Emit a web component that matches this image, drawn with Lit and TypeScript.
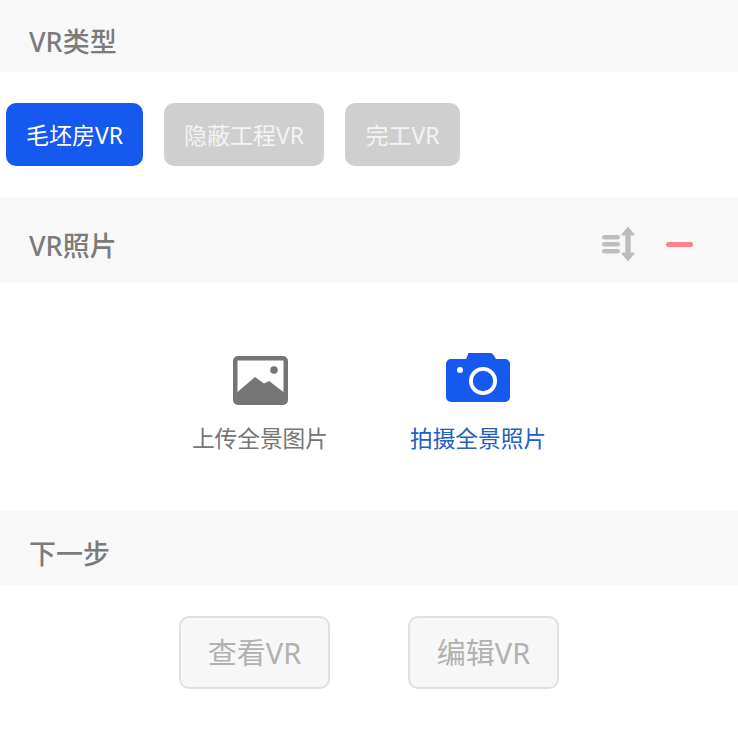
import { LitElement, html, css } from "lit";
import { customElement, state } from "lit/decorators.js";

interface VrType {
  label: string;
  width: number;
}

const VR_TYPES: VrType[] = [
  { label: "毛坯房VR", width: 137 },
  { label: "隐蔽工程VR", width: 160 },
  { label: "完工VR", width: 115 },
];

@customElement("app-root")
export class AppRoot extends LitElement {
  @state()
  active = 0;

  render() {
    return html`
      <div class="head first"><span>VR类型</span></div>
      <div class="types">
        ${VR_TYPES.map(
          (t, i) => html`
            <div
              class="type ${i === this.active ? "on" : ""}"
              style="width: ${t.width}px"
              @click=${() => (this.active = i)}
            >
              ${t.label}
            </div>
          `
        )}
      </div>

      <div class="head second">
        <span>VR照片</span>
        <div class="tools">
          <svg width="34" height="36" viewBox="0 0 34 36">
            <g fill="#bdbdbd">
              <rect x="1" y="9" width="18" height="4.6" rx="2.3" />
              <rect x="1" y="16" width="18" height="4.6" rx="2.3" />
              <rect x="1" y="23" width="18" height="4.6" rx="2.3" />
              <rect x="24.300" y="6" width="5.400" height="24" />
              <path d="M27 .5 33.300 8c.5.6.1 1.500-.7 1.500H21.400c-.8 0-1.200-.9-.7-1.500Z" />
              <path d="M27 35.500 33.300 28c.5-.6.1-1.500-.7-1.500H21.400c-.8 0-1.200.9-.7 1.500Z" />
            </g>
          </svg>
          <div class="minus"></div>
        </div>
      </div>
      <div class="uploads">
        <div class="upload">
          <div class="icon end">
            <svg class="shift" width="55" height="49" viewBox="0 0 55 49">
              <path
                fill="#757575"
                fill-rule="evenodd"
                d="M5 0h45a5 5 0 0 1 5 5v39a5 5 0 0 1-5 5H5a5 5 0 0 1-5-5V5a5 5 0 0 1 5-5ZM4.500 4.500v31.500L22 21l9 6.500 5-2.500 14.500 11V4.500Z"
              />
              <circle cx="41" cy="14" r="3.800" fill="#757575" />
            </svg>
          </div>
          <span>上传全景图片</span>
        </div>
        <div class="upload blue">
          <div class="icon">
            <svg width="64" height="49" viewBox="0 0 64 49">
              <path
                fill="#1659f0"
                fill-rule="evenodd"
                d="M23 0h21c1.500 0 2.500.6 3.100 1.600L50 6h9a5 5 0 0 1 5 5v33a5 5 0 0 1-5 5H5a5 5 0 0 1-5-5V11a5 5 0 0 1 5-5h15l2-4.400C22 .6 22 0 23 0ZM37 14a14 14 0 1 0 0 28 14 14 0 0 0 0-28Zm0 3.800a10.200 10.200 0 1 1 0 20.400 10.200 10.200 0 0 1 0-20.400ZM14 14a3 3 0 1 0 0 6 3 3 0 0 0 0-6Z"
              />
            </svg>
          </div>
          <span>拍摄全景照片</span>
        </div>
      </div>

      <div class="head third"><span>下一步</span></div>
      <div class="actions">
        <div class="action">查看VR</div>
        <div class="action">编辑VR</div>
      </div>
    `;
  }

  static styles = css`
    :host {
      display: block;
      width: 738px;
      height: 738px;
      overflow: hidden;
      background: #fff;
      font-family: "Noto Sans", "Noto Sans CJK SC", sans-serif;
    }

    .head {
      display: flex;
      align-items: center;
      justify-content: space-between;
      box-sizing: border-box;
      padding: 0 45px 0 29px;
      background: #f8f8f8;
      color: #7b7b7b;
      font-size: 27px;
      font-weight: 500;
    }

    .first {
      height: 72px;
      padding-top: 8px;
    }

    .second {
      height: 86px;
      padding-top: 8px;
    }

    .third {
      height: 74px;
      padding-top: 8px;
    }

    .tools {
      display: flex;
      align-items: center;
      gap: 31px;
    }

    .tools svg {
      display: block;
    }

    .minus {
      width: 27px;
      height: 5px;
      border-radius: 3px;
      background: #f8838a;
    }

    .types {
      display: flex;
      gap: 21px;
      height: 125px;
      padding: 31px 0 31px 6px;
      box-sizing: border-box;
    }

    .type {
      display: flex;
      align-items: center;
      justify-content: center;
      padding-bottom: 2px;
      box-sizing: border-box;
      border-radius: 10px;
      background: #cfcfcf;
      color: #f4f4f4;
      font-size: 23px;
      cursor: pointer;
    }

    .type.on {
      background: #1659f0;
      color: #fff;
    }

    .uploads {
      display: flex;
      justify-content: center;
      gap: 82px;
      height: 228px;
      padding-top: 70px;
      box-sizing: border-box;
    }

    .upload {
      display: flex;
      flex-direction: column;
      align-items: center;
      gap: 18px;
      color: #757575;
      font-size: 22.7px;
      line-height: 32px;
    }

    .upload.blue {
      color: #2260c4;
    }

    .icon {
      display: flex;
      height: 52px;
      align-items: flex-start;
    }

    .icon.end {
      align-items: flex-end;
    }

    .icon svg {
      display: block;
    }

    .icon svg.shift {
      margin-left: 2px;
    }

    .actions {
      display: flex;
      justify-content: center;
      gap: 78px;
      padding-top: 31px;
    }

    .action {
      display: flex;
      align-items: center;
      justify-content: center;
      width: 151px;
      height: 73px;
      box-sizing: border-box;
      padding-bottom: 4px;
      border: 2px solid #e0e0e0;
      border-radius: 10px;
      background: #f7f7f7;
      color: #b1b1b1;
      font-size: 29px;
    }
  `;
}
